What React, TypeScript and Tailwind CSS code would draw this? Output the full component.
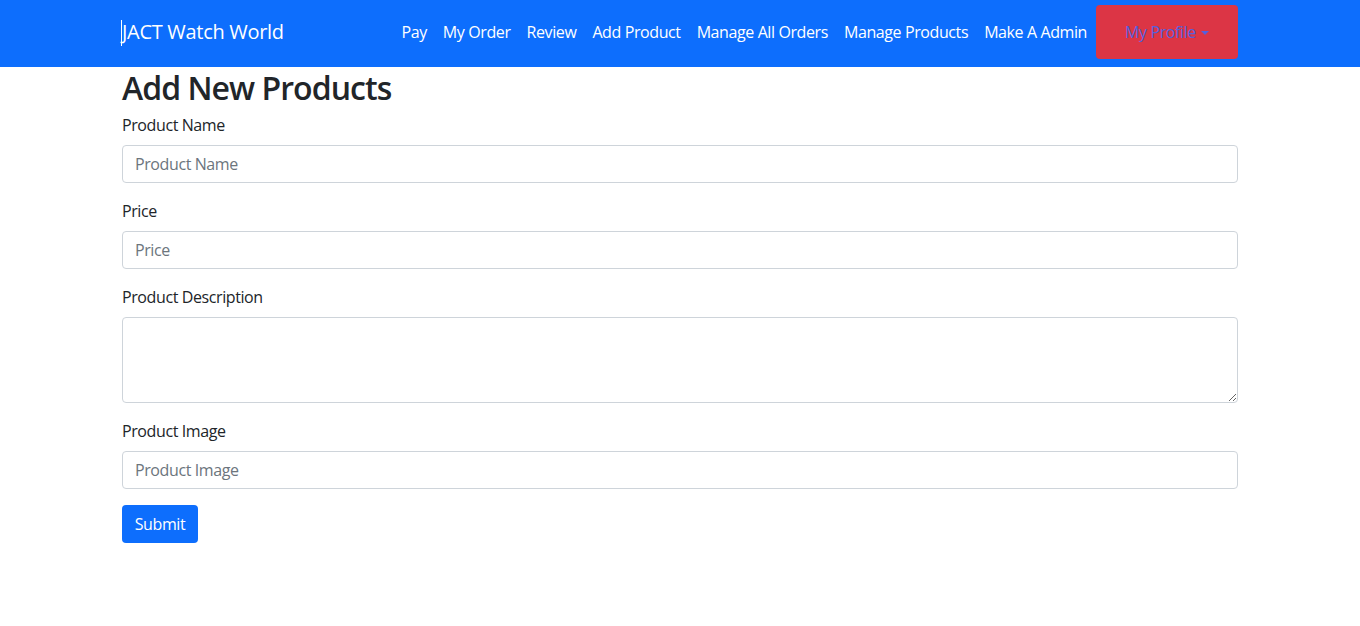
import React from 'react'

const links = ['Pay', 'My Order', 'Review', 'Add Product', 'Manage All Orders', 'Manage Products', 'Make A Admin']

const font = { fontFamily: '"Open Sans", "Noto Sans", Arial, sans-serif' }

function Field({ label, placeholder }: { label: string; placeholder: string }) {
  return (
    <div className="mb-4">
      <label className="mb-2 block leading-6 text-[#212529]">{label}</label>
      <input
        type="text"
        placeholder={placeholder}
        className="block h-[38px] w-full rounded-[4px] border border-[#ced4da] bg-white px-3 text-base tracking-[-0.025em] text-[#212529] placeholder:text-[#6c757d] focus:outline-none"
      />
    </div>
  )
}

export default function App() {
  return (
    <div className="min-h-screen bg-white text-base tracking-[-0.025em]" style={font}>
      <nav className="h-[67px] bg-[#0d6efd]">
        <div className="mx-auto flex h-full max-w-[1140px] items-center justify-between px-3 pb-1">
          <a href="#" className="relative text-[20px] leading-[30px] tracking-[-0.015em] text-white">
            <span className="absolute -left-px top-[3px] h-[26px] w-px bg-white" />
            JACT Watch World
          </a>
          <div className="flex items-center">
            {links.map((l) => (
              <a key={l} href="#" className="px-2 leading-6 text-white">
                {l}
              </a>
            ))}
            <button className="ml-px mt-[1px] flex h-[54px] w-[142px] items-center justify-center rounded-[4px] bg-[#dc3545] tracking-[-0.025em] text-[#5560dc]">
              My Profile
              <span className="ml-[5px] mt-[2px] inline-block border-x-[4px] border-t-[4px] border-x-transparent border-t-[#5560dc]" />
            </button>
          </div>
        </div>
      </nav>
      <main className="mx-auto max-w-[1140px] px-3">
        <h2 className="mb-[6px] pt-[2px] text-[32px] font-semibold leading-[38px] tracking-[-0.03em] text-[#212529]">
          Add New Products
        </h2>
        <form onSubmit={(e) => e.preventDefault()}>
          <Field label="Product Name" placeholder="Product Name" />
          <Field label="Price" placeholder="Price" />
          <div className="mb-4">
            <label className="mb-2 block leading-6 text-[#212529]">Product Description</label>
            <textarea
              rows={3}
              className="block h-[86px] w-full rounded-[4px] border border-[#ced4da] bg-white px-3 py-1.5 text-base focus:outline-none"
            />
          </div>
          <Field label="Product Image" placeholder="Product Image" />
          <button type="submit" className="h-[38px] w-[76px] rounded-[4px] bg-[#0d6efd] leading-6 text-white">
            Submit
          </button>
        </form>
      </main>
    </div>
  )
}
